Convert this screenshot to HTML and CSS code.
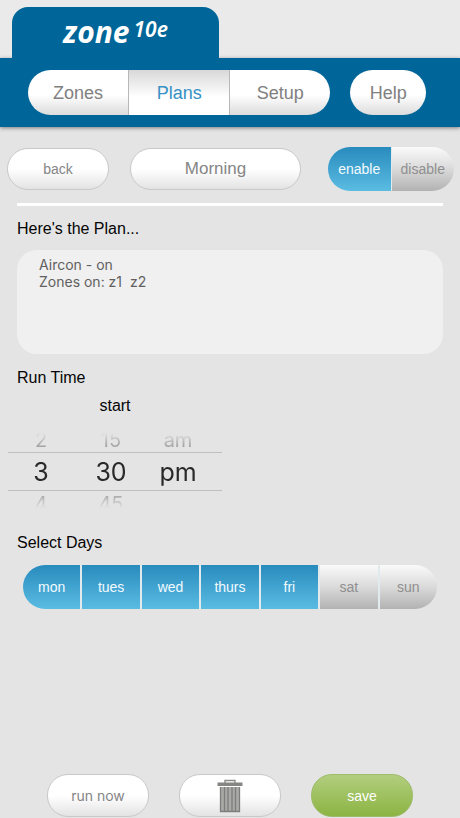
FILE: index.html
```html
<!DOCTYPE html>
<html lang="en">
<head>
<meta charset="utf-8">
<meta name="viewport" content="width=device-width, initial-scale=1">
<title>zone10e – Plans</title>
<link rel="stylesheet" href="styles.css">
</head>
<body>
<header class="header">
  <h1 class="logo"><span class="logo-name">zone</span><span class="logo-model">10e</span></h1>
  <div class="bar">
    <nav class="tabs">
      <a class="tab" href="#zones">Zones</a>
      <a class="tab tab-active" href="#plans" aria-current="page">Plans</a>
      <a class="tab" href="#setup">Setup</a>
    </nav>
    <a class="help" href="#help">Help</a>
  </div>
</header>
<main class="main">
  <div class="toolbar">
    <button class="pill" type="button">back</button>
    <button class="pill pill-name" type="button">Morning</button>
    <div class="segments segments-state" role="radiogroup" aria-label="Plan state">
      <label class="segment"><input type="radio" name="state" checked><span>enable</span></label>
      <label class="segment"><input type="radio" name="state"><span>disable</span></label>
    </div>
  </div>
  <section class="plan">
    <h2 class="heading">Here's the Plan...</h2>
    <div class="summary">Aircon - on
Zones on: z1  z2</div>
  </section>
  <section class="time">
    <h2 class="heading">Run Time</h2>
    <div class="picker">
      <h3 class="picker-title">start</h3>
      <div class="wheels">
        <ul class="wheel" role="listbox" aria-label="Hour">
          <li role="option">2</li>
          <li class="current" role="option" aria-selected="true">3</li>
          <li role="option">4</li>
        </ul>
        <ul class="wheel" role="listbox" aria-label="Minute">
          <li role="option">15</li>
          <li class="current" role="option" aria-selected="true">30</li>
          <li role="option">45</li>
        </ul>
        <ul class="wheel wheel-period" role="listbox" aria-label="Period">
          <li role="option">am</li>
          <li class="current" role="option" aria-selected="true">pm</li>
        </ul>
      </div>
    </div>
  </section>
  <section class="days">
    <h2 class="heading">Select Days</h2>
    <div class="segments segments-days" role="group" aria-label="Days">
      <label class="segment"><input type="checkbox" checked><span>mon</span></label>
      <label class="segment"><input type="checkbox" checked><span>tues</span></label>
      <label class="segment"><input type="checkbox" checked><span>wed</span></label>
      <label class="segment"><input type="checkbox" checked><span>thurs</span></label>
      <label class="segment"><input type="checkbox" checked><span>fri</span></label>
      <label class="segment"><input type="checkbox"><span>sat</span></label>
      <label class="segment"><input type="checkbox"><span>sun</span></label>
    </div>
  </section>
</main>
<footer class="actions">
  <button class="pill pill-run" type="button">run now</button>
  <button class="pill" type="button" aria-label="Delete plan">
    <svg class="trash" width="26" height="34" viewBox="0 0 26 34" aria-hidden="true">
      <path d="M8 4V1.500h10V4" fill="none" stroke="#8b8b89" stroke-width="1.4"/>
      <path d="M.5 3.500h25V7H.5z" fill="#858583"/>
      <path d="M3 8h20v25H3z" fill="#a9a9a7"/>
      <path d="M3.500 8v24.500h19V8M7.500 8v24M11 8v24M15 8v24M18.500 8v24" fill="none" stroke="#7d7d7b" stroke-width="1.300"/>
    </svg>
  </button>
  <button class="pill pill-save" type="button">save</button>
</footer>
</body>
</html>
```
FILE: styles.css
```css
* { box-sizing: border-box; }

body {
  margin: 0;
  min-height: 100vh;
  display: flex;
  flex-direction: column;
  background: #e4e4e4;
  color: #050505;
  font-family: "Liberation Sans", Arial, sans-serif;
}

h1, h2, h3, ul { margin: 0; padding: 0; font-weight: 400; }
a { text-decoration: none; }

.header { padding-top: 7px; background: #eaeaea; }

.logo {
  position: relative;
  z-index: 1;
  display: flex;
  justify-content: center;
  align-items: flex-start;
  gap: 4px;
  width: 45%;
  height: 51px;
  margin-left: 12px;
  padding-top: 5px;
  border-radius: 16px 16px 0 0;
  background: #006699;
  color: #fff;
  font-family: "Noto Sans", sans-serif;
  font-style: italic;
}
.logo-name { font-size: 30px; font-weight: 700; line-height: 40px; }
.logo-model { font-size: 21px; font-weight: 600; line-height: 34px; }

.bar {
  display: flex;
  gap: 20px;
  padding: 12px 34px 12px 28px;
  background: #006699;
  box-shadow: 0 1px 4px rgba(0, 0, 0, .45);
}
.tabs { display: flex; flex: 4; border-radius: 23px; overflow: hidden; }
.tab, .help {
  flex: 1;
  background: linear-gradient(#fff 55%, #dcdcdc);
  color: #808080;
  font-size: 18px;
  line-height: 47px;
  height: 45px;
  text-align: center;
}
.tab + .tab { border-left: 1px solid #b8b8b8; }
.tab.tab-active { background: linear-gradient(#d8d8d8, #fff 60%); color: #3592c4; }
.help { border-radius: 23px; }

.main { flex: 1; }

.toolbar {
  display: grid;
  grid-template-columns: 102px 1fr 126px;
  align-items: center;
  padding: 20px 6px 0 7px;
}
.pill {
  height: 42px;
  padding: 0;
  border: 1px solid #c9c9c9;
  border-radius: 21px;
  background: linear-gradient(#fff 50%, #e3e3e3);
  color: #858585;
  font: 14px "Liberation Sans", Arial, sans-serif;
}
.pill-name { margin: 0 27px 0 21px; font-size: 17px; }

.segments { display: flex; gap: 1px; border-radius: 22px; overflow: hidden; background: #e2eaee; }
.segment { position: relative; flex: 1; }
.segment input { position: absolute; inset: 0; margin: 0; opacity: 0; }
.segment span {
  display: block;
  height: 44px;
  background: linear-gradient(#fafafa, #dadada 50%, #b2b2b2);
  color: #8f8f8f;
  font-size: 14px;
  line-height: 45px;
  text-align: center;
}
.segment input:checked + span { background: linear-gradient(#288bbd, #5bbce2); color: #f2faff; }
.segments-days { gap: 2px; }

.plan {
  margin: 12px 17px 0;
  padding-top: 13px;
  border-top: 3px solid #fff;
}
.heading { font-size: 16px; line-height: 20px; }
.summary {
  min-height: 104px;
  margin-top: 11px;
  padding: 6px 22px;
  border-radius: 20px;
  background: #f0f0f0;
  color: #606060;
  font: 14px/17px Inter, sans-serif;
  white-space: pre-wrap;
}

.time { margin: 14px 17px 0 8px; }
.time .heading { margin-left: 9px; }
.picker { width: 214px; }
.picker-title { margin-top: 8px; font-size: 16px; line-height: 20px; text-align: center; }
.wheels {
  display: grid;
  grid-template-columns: 66px 74px 74px;
  height: 76px;
  margin-top: 16px;
  overflow: hidden;
  font-family: Inter, sans-serif;
}
.wheel {
  list-style: none;
  text-align: center;
  color: #a4a4a4;
  font-size: 20px;
  -webkit-mask-image: linear-gradient(transparent 1px, #000 14px, #000 62px, transparent 76px);
  mask-image: linear-gradient(transparent 1px, #000 14px, #000 62px, transparent 76px);
}
.wheel li { height: 20px; line-height: 16px; }
.wheel .current {
  height: 39px;
  border: solid #bfbfbf;
  border-width: 1px 0;
  color: #292929;
  font-size: 25px;
  line-height: 38px;
}
.wheel .current + li { line-height: 26px; }
.wheel-period li { padding-right: 14px; }

.days { margin: 25px 17px 0; }
.segments-days { margin: 12px 6px 0; }

.actions {
  display: grid;
  grid-template-columns: repeat(3, 102px);
  justify-content: space-between;
  padding: 0 47px 1px;
}
.actions .pill { height: 43px; }
.actions .pill-run { font-family: Inter, sans-serif; }
.trash { display: block; margin: 0 auto; }
.actions .pill-save {
  border-color: #9dbb6a;
  background: linear-gradient(#b2ce7e, #8cb443);
  color: #fff;
}
```
